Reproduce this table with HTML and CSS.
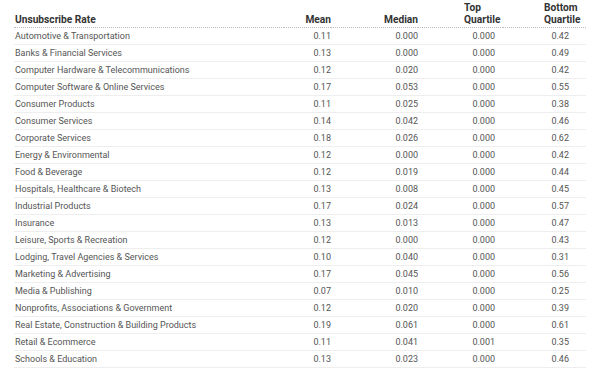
FILE: index.html
```html
<!DOCTYPE html>
<html>
<head>
<meta charset="UTF-8">
<link rel="stylesheet" href="styles.css">
<title>Unsubscribe Rate</title>
</head>
<body>
  <table class="rates">
    <thead>
      <tr>
        <th class="name">Unsubscribe Rate</th>
        <th class="mean">Mean</th>
        <th class="median">Median</th>
        <th class="top">Top<br>Quartile</th>
        <th class="bottom">Bottom<br>Quartile</th>
      </tr>
    </thead>
    <tbody>
      <tr><td class="name">Automotive &amp; Transportation</td><td class="mean">0.11</td><td class="median">0.000</td><td class="top">0.000</td><td class="bottom">0.42</td></tr>
      <tr><td class="name">Banks &amp; Financial Services</td><td class="mean">0.13</td><td class="median">0.000</td><td class="top">0.000</td><td class="bottom">0.49</td></tr>
      <tr><td class="name">Computer Hardware &amp; Telecommunications</td><td class="mean">0.12</td><td class="median">0.020</td><td class="top">0.000</td><td class="bottom">0.42</td></tr>
      <tr><td class="name">Computer Software &amp; Online Services</td><td class="mean">0.17</td><td class="median">0.053</td><td class="top">0.000</td><td class="bottom">0.55</td></tr>
      <tr><td class="name">Consumer Products</td><td class="mean">0.11</td><td class="median">0.025</td><td class="top">0.000</td><td class="bottom">0.38</td></tr>
      <tr><td class="name">Consumer Services</td><td class="mean">0.14</td><td class="median">0.042</td><td class="top">0.000</td><td class="bottom">0.46</td></tr>
      <tr><td class="name">Corporate Services</td><td class="mean">0.18</td><td class="median">0.026</td><td class="top">0.000</td><td class="bottom">0.62</td></tr>
      <tr><td class="name">Energy &amp; Environmental</td><td class="mean">0.12</td><td class="median">0.000</td><td class="top">0.000</td><td class="bottom">0.42</td></tr>
      <tr><td class="name">Food &amp; Beverage</td><td class="mean">0.12</td><td class="median">0.019</td><td class="top">0.000</td><td class="bottom">0.44</td></tr>
      <tr><td class="name">Hospitals, Healthcare &amp; Biotech</td><td class="mean">0.13</td><td class="median">0.008</td><td class="top">0.000</td><td class="bottom">0.45</td></tr>
      <tr><td class="name">Industrial Products</td><td class="mean">0.17</td><td class="median">0.024</td><td class="top">0.000</td><td class="bottom">0.57</td></tr>
      <tr><td class="name">Insurance</td><td class="mean">0.13</td><td class="median">0.013</td><td class="top">0.000</td><td class="bottom">0.47</td></tr>
      <tr><td class="name">Leisure, Sports &amp; Recreation</td><td class="mean">0.12</td><td class="median">0.000</td><td class="top">0.000</td><td class="bottom">0.43</td></tr>
      <tr><td class="name">Lodging, Travel Agencies &amp; Services</td><td class="mean">0.10</td><td class="median">0.040</td><td class="top">0.000</td><td class="bottom">0.31</td></tr>
      <tr><td class="name">Marketing &amp; Advertising</td><td class="mean">0.17</td><td class="median">0.045</td><td class="top">0.000</td><td class="bottom">0.56</td></tr>
      <tr><td class="name">Media &amp; Publishing</td><td class="mean">0.07</td><td class="median">0.010</td><td class="top">0.000</td><td class="bottom">0.25</td></tr>
      <tr><td class="name">Nonprofits, Associations &amp; Government</td><td class="mean">0.12</td><td class="median">0.020</td><td class="top">0.000</td><td class="bottom">0.39</td></tr>
      <tr><td class="name">Real Estate, Construction &amp; Building Products</td><td class="mean">0.19</td><td class="median">0.061</td><td class="top">0.000</td><td class="bottom">0.61</td></tr>
      <tr><td class="name">Retail &amp; Ecommerce</td><td class="mean">0.11</td><td class="median">0.041</td><td class="top">0.001</td><td class="bottom">0.35</td></tr>
      <tr><td class="name">Schools &amp; Education</td><td class="mean">0.13</td><td class="median">0.023</td><td class="top">0.000</td><td class="bottom">0.46</td></tr>
    </tbody>
  </table>
</body>
</html>
```

FILE: styles.css
```css
body {
  margin: 0;
  padding: 0 10px 0 14px;
  background-color: #fff;
  font-family: Roboto, sans-serif;
  font-size: 9px;
  color: #555;
}

.rates {
  width: 572px;
  border-collapse: collapse;
  table-layout: fixed;
}

.rates th {
  height: 27px;
  padding: 0 0 1px;
  box-sizing: border-box;
  vertical-align: bottom;
  color: #333;
  font-size: 10.2px;
  font-weight: bold;
  line-height: 12px;
  border-bottom: 1px dotted #bbb;
}

.rates td {
  padding: 1px 0 0;
  line-height: 15px;
  border-bottom: 1px solid #eee;
  white-space: nowrap;
}

.rates .name {
  width: 270px;
  text-align: left;
  padding-left: 1px;
}
.rates .mean {
  width: 47px;
  text-align: right;
}
.rates .median {
  width: 87px;
  text-align: right;
}
.rates .top {
  width: 85px;
  text-align: right;
  padding-right: 8px;
}
.rates .bottom {
  width: 83px;
  text-align: right;
  padding-right: 17px;
}
.rates th.top {
  text-align: left;
  padding-left: 46px;
  padding-right: 0;
}
.rates th.bottom {
  text-align: left;
  padding-left: 41px;
  padding-right: 0;
}
```
